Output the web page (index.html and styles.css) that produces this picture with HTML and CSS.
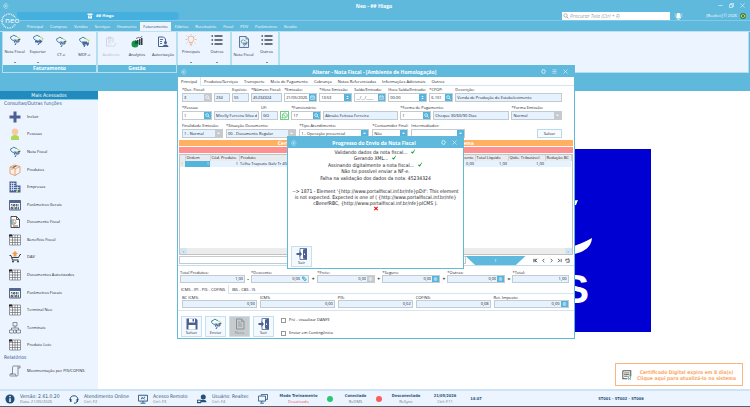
FILE: index.html
```html
<!DOCTYPE html>
<html lang="pt-BR">
<head>
<meta charset="utf-8">
<meta name="viewport" content="width=device-width, initial-scale=1">
<title>Neo - ## Hiago</title>
<link rel="stylesheet" href="styles.css">
</head>
<body>
<svg class="defs" aria-hidden="true">
  <symbol id="back" viewBox="0 0 12 12"><path d="M9 2.5A4.6 4.6 0 1 0 9 9.5M11 6H4M6 4 4 6l2 2" fill="none" stroke="#d5eefa" stroke-width="1.2"/></symbol>
  <symbol id="refresh" viewBox="0 0 12 12"><path d="M5 10.2A4.3 4.3 0 0 1 4 2.2M7 1.8a4.3 4.3 0 0 1 1 8" fill="none" stroke="#fff" stroke-width="1.8"/><path d="M4 0l3 2-3 2zM8 8l-3 2 3 2z" fill="#fff"/></symbol>
  <symbol id="lines" viewBox="0 0 12 12"><path d="M1 2h10M1 6h10M1 10h10" stroke="#e6f5fc" stroke-width="1.4"/></symbol>
  <symbol id="close" viewBox="0 0 12 12"><path d="M1 1l10 10M11 1l-10 10" stroke="#e6f5fc" stroke-width="1.4"/></symbol>
  <symbol id="search" viewBox="0 0 12 12"><circle cx="5" cy="5" r="3.4" fill="none" stroke="currentColor" stroke-width="1.5"/><path d="M7.5 7.5 11 11" stroke="currentColor" stroke-width="1.8"/></symbol>
  <symbol id="brazil" viewBox="0 0 24 24"><path d="M4 9 3 6l4-2 3-2 2 2 4 1" fill="none" stroke="#2f7f86" stroke-width="1.8"/><path d="M3 9l3 3 4 1 1 4 2 2-1 3 3-3" fill="none" stroke="#3f7fa5" stroke-width="1.8"/><path d="M15 5l3 2 4 2-1 4" fill="none" stroke="#a4cf4f" stroke-width="1.8"/></symbol>
  <symbol id="nf" viewBox="0 0 24 24"><use href="#brazil"/><path d="M12 17v-6l4 6v-6M18.500 17v-6h4M18.500 14h3" fill="none" stroke="#3d5a8d" stroke-width="1.9"/></symbol>
  <symbol id="send" viewBox="0 0 24 24"><use href="#brazil"/><path d="M6 13h9v-3l6 5-6 5v-3H6z" fill="#4a6599"/></symbol>
  <symbol id="truck" viewBox="0 0 24 24"><use href="#brazil"/><path d="M9 11h9v6H9zM18 13h3l1 2v2h-4z" fill="#4a6599"/><circle cx="12" cy="18" r="1.500" fill="#2b4068"/><circle cx="19" cy="18" r="1.500" fill="#2b4068"/></symbol>
  <symbol id="doc" viewBox="0 0 24 24"><path d="M5 2h10l5 5v15H5z" fill="none" stroke="currentColor" stroke-width="2"/><path d="M15 2v5h5M8 8h5M8 12h8M8 16h8" fill="none" stroke="currentColor" stroke-width="1.600"/></symbol>
  <symbol id="audit" viewBox="0 0 24 24"><path d="M3 4h13v9M3 4v16h10M7 2h5v4H7zM6 10h7M6 14h5M14 19l3 3 5-8" fill="none" stroke="#d0d3dc" stroke-width="1.800"/></symbol>
  <symbol id="analytics" viewBox="0 0 24 24"><circle cx="8" cy="16" r="7" fill="#149447"/><path d="M8 16V9a7 7 0 0 1 7 7z" fill="#0d5f35"/><path d="M12 8h3v5h-3zM16 6h3v12h-3zM20 4h3v14h-3z" fill="#2f3942"/><path d="M10 5l5-2 3 1 5-4" fill="none" stroke="#2f3942" stroke-width="1.400"/></symbol>
  <symbol id="auth" viewBox="0 0 24 24"><path d="M15 21H3V2h10l4 4v5" fill="none" stroke="#4d6190" stroke-width="2"/><path d="M6 7h6M6 11h4M6 15h4" stroke="#4d6190" stroke-width="1.800"/><circle cx="17" cy="13" r="3" fill="#4d6190"/><path d="M11 22c0-7 12-7 12 0z" fill="#4d6190"/></symbol>
  <symbol id="bulb" viewBox="0 0 24 24"><path d="M9 17c0-3-3-4-3-7a6 6 0 0 1 12 0c0 3-3 4-3 7zM9 20h6M10 22h4" fill="none" stroke="#f0a06a" stroke-width="1.500"/><path d="M12 0v2M3 3l2 2M21 3l-2 2M1 11h3M20 11h3M3 19l2-2M21 19l-2-2" stroke="#f0a06a" stroke-width="1.300"/></symbol>
  <symbol id="list" viewBox="0 0 24 24"><path d="M1 4h3M1 12h3M1 20h3M7 4h16M7 12h16M7 20h16" stroke="#3f4550" stroke-width="2.600"/></symbol>
  <symbol id="nfdoc" viewBox="0 0 24 24"><path d="M3 1h13l5 5v17H3z" fill="#e2edf8" stroke="#4d6a94" stroke-width="1.800"/><path d="M16 1v5h5" fill="none" stroke="#4d6a94" stroke-width="1.500"/><svg x="4" y="6" width="16" height="16" viewBox="0 0 24 24"><use href="#nf"/></svg></symbol>
  <symbol id="plus" viewBox="0 0 24 24"><path d="M9 1h6v8h8v6h-8v8H9v-8H1V9h8z" fill="#4b6194"/></symbol>
  <symbol id="person" viewBox="0 0 24 24"><path d="M4 24v-5c0-7 16-7 16 0v5z" fill="#aed957"/><circle cx="12" cy="7.500" r="6.500" fill="#fbc9a0"/></symbol>
  <symbol id="box" viewBox="0 0 24 24"><path d="M2 6l9-4 11 3v12l-10 6-10-4zM2 6l10 4 10-5M12 10v13M6 8l10-5M6 8v4" fill="none" stroke="#ef9a55" stroke-width="1.800"/><path d="M7 6l6-3 3 1-7 4z" fill="#6b625b"/></symbol>
  <symbol id="company" viewBox="0 0 24 24"><path d="M1 1h14v8h8v14H1z" fill="#4b6194"/><path d="M3 5h10M3 9h10M3 13h18M3 17h18M5 3v17M9 3v17M17 11v9" stroke="#dce9f7" stroke-width="1.500"/><path d="M14 19h4v4h-4z" fill="#a6d44f"/></symbol>
  <symbol id="binary" viewBox="0 0 24 24"><path d="M1 3h22v19H1z" fill="#f4f7fb" stroke="#53668f" stroke-width="2"/><path d="M1 3h22v5H1z" fill="#53668f"/><path d="M4 11h2v4M9 11h3v3H9zM15 10v5M18 10v5M4 17h3v3H4zM10 16v5M13 17h3v3h-3zM19 16v5" fill="none" stroke="#222c3d" stroke-width="1.400"/></symbol>
  <symbol id="fdoc" viewBox="0 0 24 24"><path d="M4 1h11l6 6v16H4z" fill="#fff" stroke="#343b45" stroke-width="1.800"/><path d="M15 1v6h6M8 20h10" fill="none" stroke="#343b45" stroke-width="1.600"/><circle cx="9" cy="12" r="5" fill="none" stroke="#ee8f48" stroke-width="2"/><path d="M2 10h8M3 14h9" stroke="#388dc0" stroke-width="2"/></symbol>
  <symbol id="sheet" viewBox="0 0 24 24"><path d="M1 2h22v20H1zM1 7h22M1 12h22M1 17h22M7 2v20M12 2v20M17 2v20" fill="#fff" stroke="#60656c" stroke-width="1.300"/><path d="M0 1h6v4H0z" fill="#222"/></symbol>
  <symbol id="cart" viewBox="0 0 24 24"><path d="M1 9h3l3 9h12M6 13h13l3-6h2" fill="none" stroke="#373d44" stroke-width="2"/><circle cx="8" cy="21" r="2" fill="#373d44"/><circle cx="18" cy="21" r="2" fill="#373d44"/><path d="M9 11V6H6l6-6 6 6h-3v5z" fill="#f79b3f"/></symbol>
  <symbol id="network" viewBox="0 0 24 24"><path d="M8 1h8v7H8zM1 16h8v6H1zM15 16h8v6h-8zM12 8v4M5 16v-4h14v4M10 16h4v6h-4" fill="none" stroke="#60656c" stroke-width="1.400"/></symbol>
  <symbol id="scroll" viewBox="0 0 24 24"><path d="M8 2h14v4h-4v13c0 3-2 3-3 3H3c-2 0-2-4 0-4h4V5c0-2 1-3 1-3M18 6V3M3 18h10c0 3 1 4 2 4" fill="none" stroke="#60656c" stroke-width="1.400"/></symbol>
  <symbol id="info" viewBox="0 0 24 24"><circle cx="12" cy="12" r="11" fill="#235076"/><path d="M12 5v3M12 10v9" stroke="#fff" stroke-width="3.500"/></symbol>
  <symbol id="headset" viewBox="0 0 24 24"><path d="M3 14C1 1 23 1 21 14M20 17c0 4-4 5-8 5" fill="none" stroke="#235076" stroke-width="2.400"/><path d="M1 12h5v7H3zM18 12h5l-2 7h-3z" fill="#235076"/></symbol>
  <symbol id="remote" viewBox="0 0 24 24"><path d="M1 3h22v14H1zM12 17v4M6 22h12M7 12l4-2-2-3M17 7l-4 3 3 3" fill="none" stroke="#235076" stroke-width="2.200"/></symbol>
  <symbol id="user" viewBox="0 0 24 24"><circle cx="15" cy="7" r="6" fill="#235076"/><path d="M6 20c0-8 17-8 17 0zM0 14h10v8H0z" fill="#235076"/><path d="M2 16h6v3H2z" fill="#fff"/></symbol>
  <symbol id="training" viewBox="0 0 24 24"><path d="M8 4V1h15v12h-4M1 5h17v12H1zM9 17v4M5 22h9" fill="none" stroke="#235076" stroke-width="2"/></symbol>
  <symbol id="cal" viewBox="0 0 12 12"><path d="M1.500 2.500h9v8h-9zM1.500 5h9M4 1v2M8 1v2M6 8h2" fill="none" stroke="#fff" stroke-width="1.200"/></symbol>
  <symbol id="spin" viewBox="0 0 12 12"><path d="M3 5l3-3 3 3zM3 7l3 3 3-3z" fill="#fff"/></symbol>
  <symbol id="calc" viewBox="0 0 12 12"><path d="M2 2h8v8H2zM2 6h8M6 2v8" fill="none" stroke="#fff" stroke-width="1.200"/></symbol>
  <symbol id="tag" viewBox="0 0 12 12"><path d="M1 1h4l6 6-4 4-6-6z" fill="#5ab5db"/><path d="M4 5l3 3M6 4l3 3" stroke="#fff"/></symbol>
  <symbol id="down" viewBox="0 0 12 12"><path d="M2 4h8L6 8z" fill="#fff"/></symbol>
  <symbol id="save" viewBox="0 0 24 24"><path d="M1 1h19l3 3v19H1z" fill="#4b6194"/><path d="M6 1h12v8H6zM5 14h14v9H5z" fill="#fff"/><path d="M13 2h3v5h-3z" fill="#4b6194"/></symbol>
  <symbol id="exit" viewBox="0 0 24 24"><path d="M8 1h13v22H8z" fill="#fff" stroke="#4b6194" stroke-width="1.600"/><path d="M14 3l8-2v22l-8-2zM1 10h6V6l5 6-5 6v-4H1z" fill="#4b6194"/><path d="M16 11h2v3h-2z" fill="#fff"/></symbol>
  <symbol id="check" viewBox="0 0 12 12"><path d="M1 7l3-1 1 2 5-7 1 1-5 9H4z" fill="#14963a"/></symbol>
</svg>

<div class="app">
  <header class="top">
    <div class="titlebar">
      <svg class="i6"><use href="#back"/></svg>
      <h1>Neo - ## Hiago</h1>
      <div class="winctl">
        <button aria-label="Minimizar"><svg viewBox="0 0 12 12"><path d="M1 6h10" stroke="#e6f5fc" stroke-width="1.500"/></svg></button>
        <button aria-label="Restaurar"><svg viewBox="0 0 12 12"><path d="M1 4h7v7H1zM4 4V1h7v7H8" fill="none" stroke="#fff" stroke-width="1.500"/></svg></button>
        <button aria-label="Fechar"><svg><use href="#close"/></svg></button>
      </div>
    </div>
    <div class="company-row">
      <div class="company-tab"><svg class="i6" viewBox="0 0 12 12"><path d="M1 1h10v3H1zM2 5h8v6H2z" fill="#fff"/><path d="M4 7h4M5 9v2" stroke="#45b0dd"/></svg><span>## Hiago</span></div>
      <label class="find"><svg class="i6"><use href="#search"/></svg><input type="text" placeholder="Procurar Tela (Ctrl + F)" aria-label="Procurar Tela"></label>
      <button class="bell" aria-label="Notificações"><svg viewBox="0 0 24 24"><path d="M4 19l2-5V9c0-8 12-8 12 0v5l2 5zM9 20h6v3H9z" fill="#fff"/><path d="M1 4l3 4M23 4l-3 4M0 12h4M20 12h4" stroke="#fff" stroke-width="1.800"/></svg></button>
      <span class="copy">[Realtec] © 2026</span>
      <svg class="i6 flag" viewBox="0 0 12 12"><circle cx="6" cy="6" r="6" fill="#2c8a45"/><path d="M0.500 6 6 2l5.500 4L6 10z" fill="#f0d441"/><circle cx="6" cy="6" r="2" fill="#25488c"/></svg>
    </div>
    <nav class="menu">
      <a href="#">Principal</a><a href="#">Compras</a><a href="#">Vendas</a><a href="#">Serviços</a><a href="#">Financeiro</a><a href="#" class="on">Faturamento</a><a href="#">Fábrica</a><a href="#">Receituário</a><a href="#">Fiscal</a><a href="#">PDV</a><a href="#">Parâmetros</a><a href="#">Gestão</a>
    </nav>
    <div class="logo">
      <svg viewBox="0 0 36 36"><circle cx="16" cy="18" r="14" fill="none" stroke="#fff" stroke-width="3" stroke-dasharray="1.500 2" /><path d="M6 11h30v13H6z" fill="#5fb9dd"/></svg>
      <span>neo</span>
    </div>
  </header>

  <div class="ribbon">
    <section class="group g1">
      <div class="tools">
        <button><svg><use href="#nf"/></svg>Nota Fiscal<i></i></button>
        <button><svg><use href="#send"/></svg>Exportar<i></i></button>
        <button class="low"><svg><use href="#nf"/></svg>CT-e</button>
        <button class="low"><svg><use href="#truck"/></svg>MDF-e</button>
      </div>
      <h2>Faturamento</h2>
    </section>
    <section class="group g2">
      <div class="tools">
        <button class="low off"><svg><use href="#audit"/></svg>Auditoria</button>
        <button class="low"><svg><use href="#analytics"/></svg>Analytics</button>
        <button class="low"><svg><use href="#auth"/></svg>Autorização</button>
      </div>
      <h2>Gestão</h2>
    </section>
    <section class="group g3">
      <div class="tools">
        <button><svg><use href="#bulb"/></svg>Principais<i></i></button>
        <button><svg><use href="#list"/></svg>Outros<i></i></button>
      </div>
    </section>
    <section class="group g4">
      <div class="tools">
        <button class="low"><svg><use href="#nfdoc"/></svg>Nota Fiscal</button>
        <button><svg><use href="#list"/></svg>Outros<i></i></button>
      </div>
    </section>
    <section class="group g5"></section>
  </div>

  <div class="body">
    <aside class="side">
      <h2>Mais Acessados</h2>
      <h3>Consultas/Outras funções</h3>
      <ul>
        <li><a href="#"><svg><use href="#plus"/></svg>Incluir</a></li>
        <li><a href="#"><svg><use href="#person"/></svg>Pessoas</a></li>
        <li><a href="#"><svg><use href="#nf"/></svg>Nota Fiscal</a></li>
        <li><a href="#"><svg><use href="#box"/></svg>Produtos</a></li>
        <li><a href="#"><svg><use href="#company"/></svg>Empresas</a></li>
        <li><a href="#"><svg><use href="#binary"/></svg>Parâmetros Gerais</a></li>
        <li><a href="#"><svg><use href="#fdoc"/></svg>Documento Fiscal</a></li>
        <li><a href="#"><svg><use href="#sheet"/></svg>Benefício Fiscal</a></li>
        <li><a href="#"><svg><use href="#cart"/></svg>DAV</a></li>
        <li><a href="#"><svg><use href="#sheet"/></svg>Documentos Autorizados</a></li>
        <li><a href="#"><svg><use href="#binary"/></svg>Parâmetros Fiscais</a></li>
        <li><a href="#"><svg><use href="#sheet"/></svg>Terminal Neo</a></li>
        <li><a href="#"><svg><use href="#network"/></svg>Terminais</a></li>
        <li><a href="#"><svg><use href="#sheet"/></svg>Produto Lote</a></li>
      </ul>
      <h3>Relatórios</h3>
      <a class="report" href="#"><svg><use href="#scroll"/></svg>Movimentação por PIS/COFINS</a>
    </aside>
    <main class="desk">
      <div class="brand">
        <svg class="swoosh" viewBox="0 0 60 60"><path d="M0 48C18 51 36 51 59 38 58 52 42 58 0 57zM38 1l7-1-2 5-5 1z" fill="#fff"/></svg>
        <span>S</span>
      </div>
      <a class="notice" href="#">
        <svg viewBox="0 0 24 24"><path d="M2 2h19v13M2 2v19h11" fill="none" stroke="#555" stroke-width="2.500"/><path d="M5 7h13M5 11h13M5 15h9" stroke="#555" stroke-width="2"/><circle cx="18" cy="17" r="3" fill="none" stroke="#5aa79b" stroke-width="2"/><path d="M16 20v4M20 20v4" stroke="#5aa79b" stroke-width="2"/></svg>
        <span>Certificado Digital expira em 8 dia(s)<br>Clique aqui para atualizá-lo no sistema</span>
      </a>
    </main>
  </div>

  <footer class="status">
    <div class="st"><svg><use href="#info"/></svg><p><b>Versão: 2.61.0.20</b>Data: 21/05/2026</p></div>
    <div class="st"><svg><use href="#headset"/></svg><p><b>Atendimento Online</b>Ctrl+F2</p></div>
    <div class="st"><svg><use href="#remote"/></svg><p><b>Acesso Remoto</b>Ctrl+F3</p></div>
    <div class="st"><svg><use href="#user"/></svg><p><b>Usuário: Realtec</b>Ctrl+F4</p></div>
    <div class="st mid"><svg><use href="#training"/></svg><p><strong>Modo Treinamento</strong><em>Desativado</em></p></div>
    <div class="st mid"><span class="dot green"></span><p><strong>Conectado</strong>ReDMS</p></div>
    <div class="st mid"><span class="dot red"></span><p><strong>Desconectado</strong>ReSync</p></div>
    <div class="st mid"><p><strong>21/05/2026</strong>Ctrl+F11</p></div>
    <div class="st mid"><p><strong>14:07</strong></p></div>
    <div class="st mid"><p><strong>ST001 - ST002 - ST006</strong></p></div>
  </footer>

  <section class="window invoice">
    <div class="wbar"><svg class="i6"><use href="#back"/></svg><h2>Alterar - Nota Fiscal - [Ambiente de Homologação]</h2>
      <div class="winctl"><button aria-label="Atualizar"><svg><use href="#refresh"/></svg></button><button aria-label="Menu"><svg><use href="#lines"/></svg></button><button aria-label="Fechar"><svg><use href="#close"/></svg></button></div></div>
    <nav class="tabs"><a href="#" class="on">Principal</a><a href="#">Produtos/Serviços</a><a href="#">Transporte</a><a href="#">Meio de Pagamento</a><a href="#">Cobrança</a><a href="#">Notas Referenciadas</a><a href="#">Informações Adicionais</a><a href="#">Outros</a></nav>
    <form class="form">
      <div class="row r1">
        <div class="f"><label for="doc">*Doc. Fiscal:</label><div class="c ro"><input id="doc" value="3"><svg class="b gray"><use href="#search"/></svg></div></div>
        <div class="f"><div class="c ro"><input aria-label="Modelo" value="234"></div></div>
        <div class="f"><label for="esp">Espécie:</label><div class="c ro"><input id="esp" value="55"></div></div>
        <div class="f"><label for="num">*Número Fiscal:</label><div class="c ro"><input id="num" value="45234324"></div></div>
        <div class="f"><label for="emi">*Emissão:</label><div class="c"><input id="emi" value="21/05/2026"><svg class="b"><use href="#cal"/></svg></div></div>
        <div class="f"><label for="hem">*Hora Emissão:</label><div class="c"><input id="hem" value="13:53"><svg class="b"><use href="#spin"/></svg></div></div>
        <div class="f"><label for="sai">Saída/Entrada:</label><div class="c"><input id="sai" value="__/__/____"><svg class="b"><use href="#cal"/></svg></div></div>
        <div class="f"><label for="hsa">Hora Saída/Entrada:</label><div class="c"><input id="hsa" value="00:00"><svg class="b"><use href="#spin"/></svg></div></div>
        <div class="f"><label for="cfo">*CFOP:</label><div class="c"><input id="cfo" value="6.101"><svg class="b"><use href="#search"/></svg></div></div>
        <div class="f"><label for="des">Descrição:</label><div class="c ro"><input id="des" value="Venda de Produção do Estabelecimento"></div></div>
      </div>
      <div class="row r2">
        <div class="f"><label for="pes">*Pessoa:</label><div class="c"><input id="pes" value="1"><svg class="b"><use href="#search"/></svg></div></div>
        <div class="f"><div class="c ro"><input aria-label="Nome da pessoa" value="Mirelly Ferreira Silva de Andrade"></div></div>
        <div class="f"><label for="uf">UF:</label><div class="c ro"><input id="uf" value="GO"></div></div>
        <button type="button" class="wa" aria-label="WhatsApp"><svg viewBox="0 0 12 12"><path d="M1.500 10.500l1-3A4.300 4.300 0 1 1 4.500 9.800z" fill="none" stroke="#39b85a" stroke-width="1.300"/><path d="M4.500 4c0 2 1.500 3.500 3.500 3.500" fill="none" stroke="#39b85a" stroke-width="1.500"/></svg></button>
        <div class="f"><label for="fun">*Funcionário:</label><div class="c"><input id="fun" value="17"><svg class="b"><use href="#search"/></svg></div></div>
        <div class="f"><div class="c ro"><input aria-label="Nome do funcionário" value="Abraão Feitosa Ferreira"></div></div>
        <div class="f"><label for="fpg">*Forma de Pagamento:</label><div class="c"><input id="fpg" value="1"><svg class="b"><use href="#search"/></svg></div></div>
        <div class="f"><div class="c ro"><input aria-label="Descrição do pagamento" value="Cheque 30/60/90 Dias"></div></div>
        <div class="f"><label for="fem">*Forma Emissão:</label><div class="c ro"><select id="fem"><option>Normal</option></select><svg class="b gray"><use href="#down"/></svg></div></div>
      </div>
      <div class="row r3">
        <div class="f"><label for="fin">Finalidade Emissão:</label><div class="c ro"><select id="fin"><option>1 - Normal</option></select><svg class="b gray"><use href="#down"/></svg></div></div>
        <div class="f"><label for="sit">*Situação Documento:</label><div class="c ro"><select id="sit"><option>00 - Documento Regular</option></select><svg class="b gray"><use href="#down"/></svg></div></div>
        <div class="f"><label for="tip">*Tipo Atendimento:</label><div class="c"><select id="tip"><option>1 - Operação presencial</option></select><svg class="b"><use href="#down"/></svg></div></div>
        <div class="f"><label for="con">*Consumidor Final:</label><div class="c"><select id="con"><option>Não</option></select><svg class="b"><use href="#down"/></svg></div></div>
        <div class="f"><label for="int">Intermediador:</label><div class="c"><select id="int"><option></option></select><svg class="b"><use href="#down"/></svg></div></div>
        <span></span>
        <button type="button" class="savebtn">Salvar</button>
      </div>
    </form>
    <div class="alert orange">Certificado Digital expira em 8 dia(s). Clique aqui para atualizá-lo no sistema</div>
    <div class="alert pink"></div>
    <div class="gridbox">
      <table>
        <colgroup><col class="k1"><col class="k2"><col class="k3"><col class="k4"><col class="k5"><col class="k6"><col class="k7"><col class="k8"></colgroup>
        <thead><tr><th></th><th>Ordem</th><th>Cód. Produto</th><th>Produto</th><th class="n">Desconto</th><th>Total Líquido</th><th>Qtde. Tributável</th><th>Redução BC</th></tr></thead>
        <tbody><tr><td class="mark">1</td><td class="sel n">1</td><td class="n">1</td><td>Telha Trapezio Galv Tr 40</td><td class="n">0,00</td><td class="n">1,00</td><td class="n">1,00</td><td></td></tr></tbody>
      </table>
      <div class="scroll"><button aria-label="Rolar à esquerda">‹</button><button aria-label="Rolar à direita">›</button></div>
    </div>
    <div class="pager">
      <div class="msg"></div>
      <span class="page">1</span>
      <div class="pgbtns">
        <button aria-label="Primeira"><svg viewBox="0 0 12 12"><path d="M2 2v8M10 2 5 6l5 4M5 2v8" /></svg></button>
        <button aria-label="Anterior"><svg viewBox="0 0 12 12"><path d="M8 2 4 6l4 4"/></svg></button>
        <button aria-label="Próxima"><svg viewBox="0 0 12 12"><path d="M4 2l4 4-4 4"/></svg></button>
        <button aria-label="Última"><svg viewBox="0 0 12 12"><path d="M2 2l5 4-5 4M10 2v8"/></svg></button>
        <button aria-label="Recarregar"><svg viewBox="0 0 12 12"><path d="M2 7V3h7M10 5v5H3M8 1l2 2-2 2"/></svg></button>
      </div>
    </div>
    <div class="totals">
      <div class="f"><label for="t1">Total Produtos:</label><div class="c ro num"><input id="t1" value="1,00"></div></div><b>-</b>
      <div class="f"><label for="t2">*Desconto:</label><div class="c ro num"><input id="t2" value="0,00"><svg class="b tag"><use href="#tag"/></svg></div></div><b>+</b>
      <div class="f"><label for="t3">*Frete:</label><div class="c ro num"><input id="t3" value="0,00"><svg class="b gray"><use href="#calc"/></svg></div></div><b>+</b>
      <div class="f"><label for="t4">*Seguro:</label><div class="c ro num"><input id="t4" value="0,00"><svg class="b"><use href="#calc"/></svg></div></div><b>+</b>
      <div class="f"><label for="t5">*Outras:</label><div class="c ro num"><input id="t5" value="0,00"><svg class="b"><use href="#calc"/></svg></div></div><b>=</b>
      <div class="f"><label for="t6">*Total:</label><div class="c ro num"><input id="t6" value="1,00"></div></div>
    </div>
    <nav class="tabs sub"><a href="#" class="on">ICMS - IPI - PIS - COFINS</a><a href="#">IBS - CBS - IS</a></nav>
    <div class="taxes">
      <div class="f"><label for="x1">BC ICMS:</label><div class="c ro num"><input id="x1" value="0,93"></div></div>
      <div class="f"><label for="x2">ICMS:</label><div class="c ro num"><input id="x2" value="0,00"></div></div>
      <div class="f"><label for="x3">PIS:</label><div class="c ro num"><input id="x3" value="0,02"></div></div>
      <div class="f"><label for="x4">COFINS:</label><div class="c ro num"><input id="x4" value="0,08"></div></div>
      <div class="f"><label for="x5">Ret. Imposto:</label><div class="c ro num"><input id="x5" value="0,00"><svg class="b"><use href="#calc"/></svg></div></div>
    </div>
    <div class="actions">
      <button class="big"><svg><use href="#save"/></svg>Salvar</button>
      <button class="big"><svg><use href="#nf"/></svg>Enviar</button>
      <button class="big dis" disabled><svg><use href="#doc"/></svg>Nova</button>
      <button class="big"><svg><use href="#exit"/></svg>Sair</button>
      <div class="checks"><label><input type="checkbox">Pré - visualizar DANFE</label><label><input type="checkbox">Enviar em Contingência</label></div>
    </div>
  </section>

  <section class="window progress">
    <div class="wbar"><svg class="i6"><use href="#back"/></svg><h2>Progresso do Envio da Nota Fiscal</h2>
      <div class="winctl"><button aria-label="Atualizar"><svg><use href="#refresh"/></svg></button><button aria-label="Fechar"><svg><use href="#close"/></svg></button></div></div>
    <div class="log">
      <p>Validando dados da nota fiscal...<svg><use href="#check"/></svg></p>
      <p>Gerando XML...<svg><use href="#check"/></svg></p>
      <p>Assinando digitalmente a nota fiscal...<svg><use href="#check"/></svg></p>
      <p>Não foi possível enviar a NF-e.</p>
      <p>Falha na validação dos dados da nota: 45234324</p>
      <p>&nbsp;</p>
      <p>--&gt; 1871 - Element '{http://www.portalfiscal.inf.br/nfe}pDif': This element<br>is not expected. Expected is one of ( {http://www.portalfiscal.inf.br/nfe}<br>cBenefRBC, {http://www.portalfiscal.inf.br/nfe}pICMS ).</p>
      <p><svg class="x" viewBox="0 0 12 12"><path d="M2 2l8 8M10 2l-8 8" stroke="#f01818" stroke-width="3"/></svg></p>
    </div>
    <button class="big"><svg><use href="#exit"/></svg>Sair</button>
  </section>
</div>
</body>
</html>
```

FILE: styles.css
```css
:root {
  --blue: #5fb9dd;
  --pale: #ecf5ff;
  --ui: "Open Sans", "Noto Sans", sans-serif;
  --wide: "DejaVu Sans Condensed", "DejaVu Sans", sans-serif;
}
* { box-sizing: border-box; margin: 0; padding: 0; }
body { font: 4px/6px var(--ui); color: #1c2028; background: #fff; }
a { color: inherit; text-decoration: none; }
button, input, select { font: inherit; color: inherit; border: 0; background: none; min-width: 0; }
svg { display: block; flex: none; }
.defs { position: absolute; width: 0; height: 0; }
.i6 { width: 6px; height: 6px; }
.app { position: relative; min-height: 100vh; display: flex; flex-direction: column; border-bottom: 1px solid #5a6068; }

.top { position: relative; background: var(--blue); color: #fff; }
.titlebar { display: grid; grid-template-columns: 1fr auto 1fr; align-items: center; height: 11px; padding: 0 5px 0 3px; }
.titlebar h1, .wbar h2 { font: bold 5px/8px var(--ui); color: #fff; }
.winctl { display: flex; gap: 6px; justify-content: flex-end; }
.winctl button, .winctl svg { width: 5px; height: 5px; display: block; }
.company-row { display: flex; align-items: center; height: 10px; padding: 0 4px 0 17px; border-bottom: 1px solid #80cbe8; }
.company-tab { display: flex; align-items: center; gap: 3px; width: 162px; height: 8px; padding-left: 70px; border-radius: 0 4px 4px 0; background: #45b0dd; font-weight: bold; color: #fff; }
.find { display: flex; align-items: center; gap: 1px; width: 108px; height: 8px; margin-left: auto; padding: 0 1px; background: #fff; color: #8fa0ab; }
.find input { flex: 1; height: 8px; font: italic 5px/8px var(--ui); }
.find input::placeholder { color: #9aa4ac; }
.bell { margin: 0 20px 0 4px; }
.bell svg { width: 9px; height: 8px; }
.copy { width: 34px; text-align: right; white-space: nowrap; }
.flag { margin-left: 3px; }
.menu { display: flex; align-items: stretch; gap: 1px; height: 10px; padding: 1px 0 0 24px; }
.menu a { padding: 1px 3px 0; line-height: 8px; }
.menu .on { background: var(--pale); color: #2a4a66; }
.logo { position: absolute; left: 1px; top: 12px; width: 18px; height: 18px; }
.logo svg { width: 18px; height: 18px; }
.logo span { position: absolute; left: 4px; top: 3px; font: 8px/9px var(--ui); color: #fff; }

.ribbon { display: flex; height: 42px; padding: 0 1px 0 2px; border-top: 1px solid #bfe0f0; background: var(--blue); }
.group { display: flex; flex-direction: column; border: 1px solid #b5dff0; border-width: 0 1px 1px 1px; background: var(--pale); }
.g1 { width: 95px; } .g2 { width: 80px; } .g3 { width: 54px; } .g4 { width: 48px; } .g5 { flex: 1; }
.group h2 { height: 7px; font: bold 5px/7px var(--ui); color: #fff; text-align: center; background: var(--blue); }
.tools { display: flex; flex: 1; justify-content: space-around; }
.tools button { flex: 1 1 0; display: flex; flex-direction: column; align-items: center; gap: 3px; padding-top: 2px; white-space: nowrap; color: #1f3048; }
.tools svg { width: 12px; height: 12px; }
.tools .low { padding-top: 4px; gap: 4px; }
.tools .off { color: #b7bcc6; }
.tools i { width: 0; border: 1px solid transparent; border-top-color: #222; margin-top: 4px; }

.body { flex: 1; display: flex; border-top: 18px solid var(--blue); }
.side { width: 98px; flex: none; display: flex; flex-direction: column; background: var(--pale); }
.side h2 { height: 9px; font: 5px/8px var(--wide); text-align: center; color: #fff; background: #218bbd; border-bottom: 1px solid #80cbe8; }
.side h3 { height: 8px; padding-left: 4px; font: 5px/7px var(--wide); color: #33538a; }
.side ul { list-style: none; flex: 1; display: flex; flex-direction: column; }
.side li { flex: 1; display: flex; }
.side a { display: flex; align-items: center; gap: 6px; padding-left: 9px; }
.side svg { width: 12px; height: 12px; }
.side .report { height: 17px; margin-bottom: 10px; }
.desk { flex: 1; position: relative; display: flex; align-items: center; justify-content: center; }
.brand { position: relative; width: 454px; max-width: 80%; aspect-ratio: 454 / 183; background: #0000d2; overflow: hidden; }
.brand span { position: absolute; right: 62px; bottom: 19px; font: bold 41px/48px "Liberation Sans", sans-serif; color: #fff; }
.swoosh { position: absolute; right: 58px; top: 51px; width: 60px; height: 60px; }
.notice { position: absolute; right: 7px; bottom: 3px; display: flex; align-items: center; gap: 5px; width: 128px; height: 23px; padding-left: 6px; border: 1px solid #fbb57e; background: #fff; font: bold 5px/6px var(--wide); color: #fba969; text-align: center; white-space: nowrap; }
.notice svg { width: 10px; height: 12px; }

.status { display: grid; grid-template-columns: 66fr 69fr 59fr 61fr 69fr 49fr 52fr 35fr 27fr 263fr; align-items: center; height: 17px; background: var(--pale); border-top: 2px solid #cfe3f7; color: #6c7884; }
.st { display: flex; align-items: center; gap: 5px; min-width: 0; padding-left: 5px; white-space: nowrap; }
.st svg { width: 10px; height: 10px; }
.st:nth-child(n+2) svg { margin-left: -2px; }
.st p { line-height: 6px; }
.st b, .st strong { display: block; font-family: var(--wide); color: #2f567c; }
.st b { font-weight: normal; font-size: 5px; }
.st strong { font-weight: bold; }
.st em { font-style: normal; color: #f25252; }
.st.mid p { flex: 1; text-align: center; }
.dot { width: 6px; height: 6px; border-radius: 50%; flex: none; margin-left: -2px; }
.green { background: #2ec771; } .red { background: #fb5c5c; }

.window { position: absolute; border: 1px solid #62b9d8; background: #fff; }
.invoice { left: 177px; top: 65px; width: 53%; }
.progress { left: 287px; top: 136px; width: 177px; }
.wbar { display: grid; grid-template-columns: 26px 1fr 26px; align-items: center; height: 11px; padding: 0 6px 0 3px; background: var(--blue); }
.wbar h2 { text-align: center; white-space: nowrap; }
.tabs { display: flex; height: 9px; border-bottom: 1px solid #d5e6f0; }
.tabs a { padding: 1px 3px 0; line-height: 7px; white-space: nowrap; }
.tabs .on { height: 9px; border: 1px solid #d5e6f0; border-width: 0 1px 0 0; background: #fff; }
.form { padding: 1px 12px 2px 4px; }
.row { display: grid; align-items: end; height: 15px; margin-bottom: 3px; column-gap: 2px; }
.row:last-child { margin-bottom: 0; }
.r1 { grid-template-columns: 30fr 16fr 17fr 31fr 33fr 33fr 32fr 39fr 24fr 106fr; }
.r2 { grid-template-columns: 30fr 45fr 17fr 9fr 30fr 75fr 31fr 76fr 50fr; }
.r3 { grid-template-columns: 41fr 70fr 70fr 36fr 54fr 66fr 24fr; column-gap: 3px; }
.f { min-width: 0; }
.f label { display: block; height: 6px; line-height: 6px; white-space: nowrap; }
.c { display: flex; height: 9px; border: 1px solid #c3cbd2; background: #fff; }
.ro { background: #e6f3ff; }
.c input, .c select { flex: 1; width: 0; height: 7px; padding: 0 1px; line-height: 7px; appearance: none; }
.num input { text-align: right; }
.b { width: 7px; height: 7px; padding: 1px; background: #55b4dc; color: #fff; }
.b.gray { background: #c6cacd; }
.b.tag { background: none; padding: 0; }
.wa { height: 9px; border: 1px solid #6fcf87; }
.wa svg { width: 7px; height: 7px; }
.savebtn { height: 9px; border: 1px solid #b9dbe9; background: #f6fbff; line-height: 6px; }
.alert { height: 6px; margin: 0 1px 1px; font: bold 5px/6px var(--wide); text-align: center; white-space: nowrap; color: #fff; overflow: hidden; }
.orange { background: #ffb061; } .pink { background: #ff9090; }
.gridbox { display: flex; flex-direction: column; justify-content: space-between; height: 101px; margin: 1px 1px 0; border: 1px solid #bcc3c9; }
table { width: 100%; table-layout: fixed; border-collapse: collapse; }
th { height: 6px; font-weight: normal; text-align: left; background: #e8ecef; border-right: 1px solid #cfd5da; }
th, td { padding: 0 1px; line-height: 6px; white-space: nowrap; overflow: hidden; }
tbody tr { background: #e6f3ff; }
.n { text-align: right; }
.sel { background: #55b4dc; color: #fff; }
.mark { background: #e8ecef; color: #f0a050; }
.k1 { width: 5px; } .k2 { width: 25px; } .k3 { width: 29px; } .k5 { width: 40px; } .k6 { width: 33px; } .k7 { width: 37px; } .k8 { width: 26px; }
.scroll { display: flex; justify-content: space-between; height: 6px; background: #ececec; }
.scroll button { width: 7px; line-height: 5px; background: #d3e6f4; }
.pager { display: flex; align-items: flex-start; height: 11px; padding: 1px 1px 0; border-bottom: 1px solid #c4dfea; }
.msg { flex: 1; height: 8px; border: 1px solid #c3cbd2; }
.page { width: 60px; margin-right: 7px; line-height: 9px; text-align: center; color: #fff; background: var(--blue); clip-path: polygon(0 0, 100% 0, 84% 100%, 16% 100%); }
.pgbtns { display: flex; gap: 3px; padding: 2px 3px 0 0; }
.pgbtns svg { width: 5px; height: 5px; fill: none; stroke: #333; stroke-width: 1.8px; }
.totals { display: grid; grid-template-columns: 65fr 6fr 58fr 8fr 58fr 7fr 58fr 7fr 58fr 7fr 56fr; align-items: end; padding: 4px 5px 2px 2px; }
.totals label, .taxes label { height: 5px; line-height: 5px; }
.totals .c, .taxes .c { height: 8px; }
.totals .c > *, .taxes .c > * { height: 6px; line-height: 6px; }
.totals b { text-align: center; line-height: 8px; font-size: 5px; }
.taxes { display: grid; grid-template-columns: repeat(5, 1fr); gap: 3px; padding: 1px 5px 2px 4px; border-bottom: 1px solid #d5e6f0; }
.actions { display: flex; gap: 3px; padding: 5px 3px 1px; }
.big { display: flex; flex-direction: column; align-items: center; width: 21px; height: 21px; padding-top: 1px; border: 1px solid #c5e0ee; background: #f3f9ff; color: #1f3048; }
.big svg { width: 12px; height: 12px; }
.dis { background: #c8cbce; color: #8b9096; }
.checks { display: flex; flex-direction: column; justify-content: space-between; padding: 1px 4px; }
.checks label { display: flex; align-items: center; gap: 3px; }
.checks input { width: 5px; height: 5px; appearance: none; border: 1px solid #999; background: #fff; }
.log { display: flex; flex-direction: column; justify-content: space-between; height: 63px; margin-top: 1px; text-align: center; white-space: nowrap; font: 5px/6px var(--wide); }
.log p { height: 6px; }
.log p:nth-child(7) { height: 18px; }
.log svg { display: inline-block; width: 6px; height: 5px; margin-left: 3px; vertical-align: top; }
.log .x { margin: 0; }
.progress .big { margin: 34px 0 1px 3px; }
```
